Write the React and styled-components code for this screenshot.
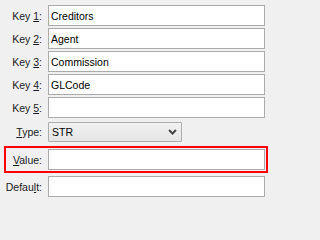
import React from "react";
import styled, { createGlobalStyle } from "styled-components";

const fields = [
  { id: "key1", before: "Key ", hot: "1", after: ":", value: "Creditors" },
  { id: "key2", before: "Key ", hot: "2", after: ":", value: "Agent" },
  { id: "key3", before: "Key ", hot: "3", after: ":", value: "Commission" },
  { id: "key4", before: "Key ", hot: "4", after: ":", value: "GLCode" },
  { id: "key5", before: "Key ", hot: "5", after: ":", value: "" },
];

const GlobalStyle = createGlobalStyle`
  html, body {
    margin: 0;
    padding: 0;
    background: #f0f0f0;
  }
  body {
    font-family: "Liberation Sans", Arial, sans-serif;
    font-size: 10.5px;
    color: #111;
  }
`;

const Form = styled.div`
  display: flex;
  flex-direction: column;
  gap: 2px;
  width: 265px;
  padding-top: 5px;
`;

const Row = styled.div`
  display: grid;
  grid-template-columns: ${({ $highlight }) => ($highlight ? "35px" : "42px")} 1fr;
  column-gap: 6px;
  align-items: center;
  margin-top: ${({ $gapTop }) => $gapTop || 0}px;
  margin-left: ${({ $highlight }) => ($highlight ? "7px" : "0")};
  margin-bottom: ${({ $highlight }) => ($highlight ? "4px" : "0")};
  outline: ${({ $highlight }) => ($highlight ? "2px solid #ff0000" : "none")};
  outline-offset: 1px;
`;

const Label = styled.label`
  text-align: right;
  white-space: nowrap;
  color: #1a1a24;
  u {
    text-decoration: underline;
    text-underline-offset: 1px;
  }
`;

const TextBox = styled.input`
  box-sizing: border-box;
  height: 21px;
  width: 100%;
  margin: 0;
  padding: 0 2px;
  border: 1px solid #ababab;
  background: #ffffff;
  font: inherit;
  color: #000;
  outline: none;
`;

const Combo = styled.div`
  box-sizing: border-box;
  display: flex;
  align-items: center;
  justify-content: space-between;
  width: 134px;
  height: 20px;
  padding: 0 4px 0 3px;
  border: 1px solid #acacac;
  border-radius: 1px;
  background: linear-gradient(#f2f2f2, #e5e5e5);
  color: #000;
`;

const Chevron = () => (
  <svg width="9" height="6" viewBox="0 0 9 6">
    <path d="M1 1 L4.5 4.5 L8 1" fill="none" stroke="#454545" strokeWidth="2" />
  </svg>
);

const HotLabel = ({ before, hot, after, htmlFor }) => (
  <Label htmlFor={htmlFor}>
    {before}
    <u>{hot}</u>
    {after}
  </Label>
);

export default function App() {
  return (
    <>
      <GlobalStyle />
      <Form>
        {fields.map((f) => (
          <Row key={f.id}>
            <HotLabel before={f.before} hot={f.hot} after={f.after} htmlFor={f.id} />
            <TextBox id={f.id} defaultValue={f.value} readOnly />
          </Row>
        ))}
        <Row $gapTop={2}>
          <HotLabel before="" hot="T" after="ype:" />
          <Combo>
            <span>STR</span>
            <Chevron />
          </Combo>
        </Row>
        <Row $highlight $gapTop={5}>
          <HotLabel before="" hot="V" after="alue:" htmlFor="value" />
          <TextBox id="value" defaultValue="" readOnly />
        </Row>
        <Row>
          <HotLabel before="Defau" hot="l" after="t:" htmlFor="default" />
          <TextBox id="default" defaultValue="" readOnly />
        </Row>
      </Form>
    </>
  );
}
